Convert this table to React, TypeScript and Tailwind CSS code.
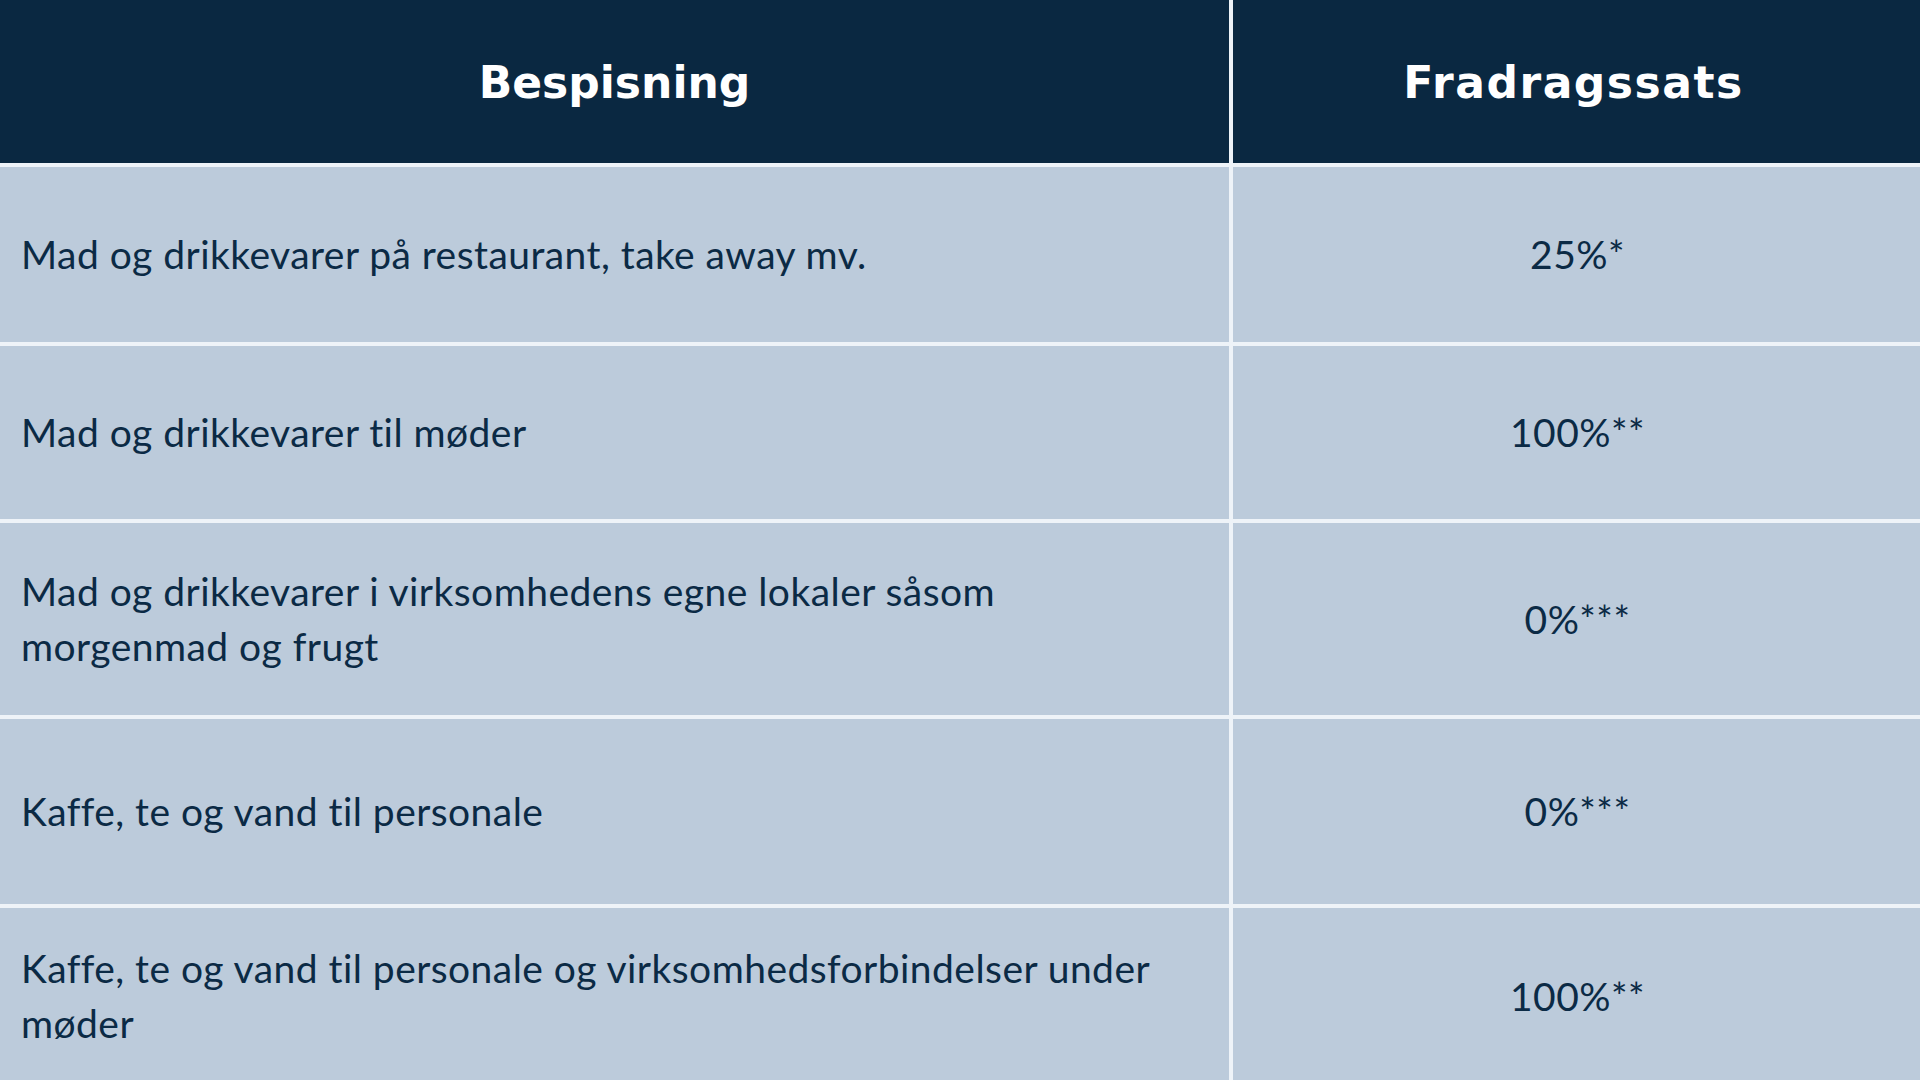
import React from "react";

const rows: { label: React.ReactNode; rate: string; h: string }[] = [
  { label: "Mad og drikkevarer på restaurant, take away mv.", rate: "25%*", h: "h-[175px]" },
  { label: "Mad og drikkevarer til møder", rate: "100%**", h: "h-[173px]" },
  {
    label: (
      <>
        Mad og drikkevarer i virksomhedens egne lokaler såsom
        <br />
        morgenmad og frugt
      </>
    ),
    rate: "0%***",
    h: "h-[192px]",
  },
  { label: "Kaffe, te og vand til personale", rate: "0%***", h: "h-[185px]" },
  {
    label: (
      <>
        Kaffe, te og vand til personale og virksomhedsforbindelser under
        <br />
        møder
      </>
    ),
    rate: "100%**",
    h: "h-[176px]",
  },
];

export default function App() {
  return (
    <div className="w-[1920px] h-[1080px] overflow-hidden bg-[#eef3f8] font-['Lato','Noto_Sans',sans-serif]">
      <div className="grid grid-cols-[1229px_1fr] gap-x-[4px] gap-y-[4px]">
        <div className="h-[163px] bg-[#0a2841] flex items-center justify-center">
          <span className="text-white font-bold font-['DejaVu_Sans',sans-serif] text-[44px] tracking-[0px] pt-[2px]">Bespisning</span>
        </div>
        <div className="h-[163px] bg-[#0a2841] flex items-center justify-center">
          <span className="text-white font-bold font-['DejaVu_Sans',sans-serif] text-[44px] tracking-[1.5px] pt-[2px] pr-[6px]">Fradragssats</span>
        </div>
        {rows.map((r, i) => (
          <React.Fragment key={i}>
            <div className={`${r.h} bg-[#bccbdb] flex items-center pl-[21px]`}>
              <span className="text-[#0b2a45] text-[39px] leading-[55px] tracking-[0.45px] [font-variant-ligatures:none]">{r.label}</span>
            </div>
            <div className={`${r.h} bg-[#bccbdb] flex items-center justify-center`}>
              <span className="text-[#0b2a45] text-[39px] leading-[55px] tracking-[0.45px] pl-[2px] [font-variant-ligatures:none]">{r.rate}</span>
            </div>
          </React.Fragment>
        ))}
      </div>
    </div>
  );
}
